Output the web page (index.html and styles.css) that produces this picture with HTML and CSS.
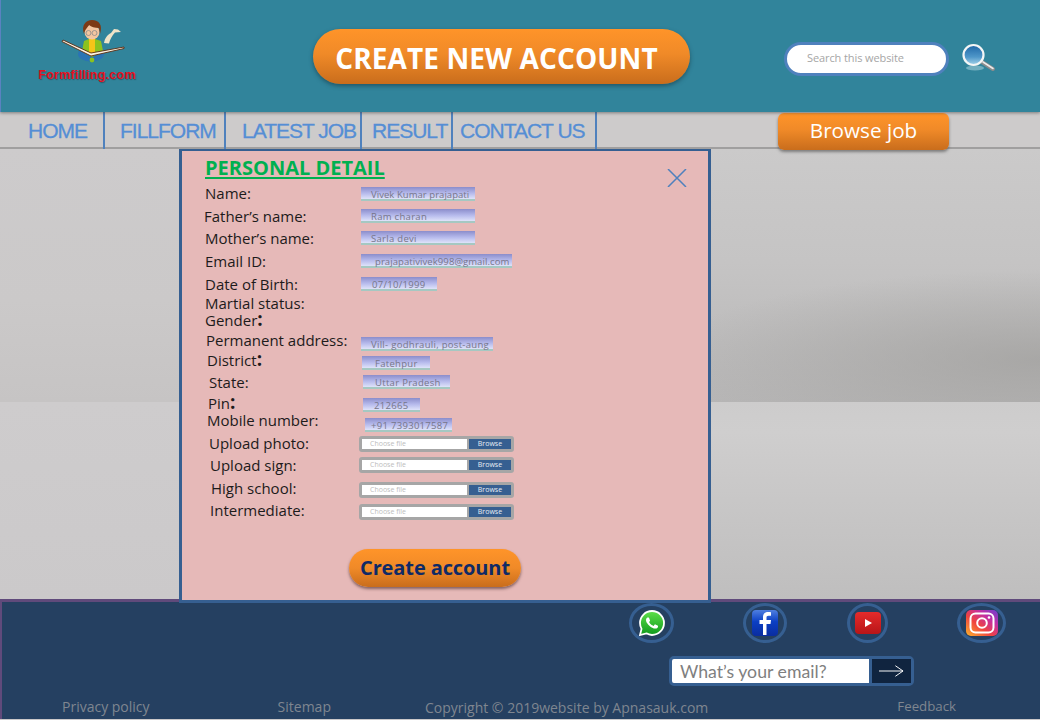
FILE: index.html
```html
<!DOCTYPE html>
<html lang="en">
<head>
<meta charset="utf-8">
<title>Create new account</title>
<link rel="stylesheet" href="styles.css">
</head>
<body>
<header class="top">
  <a class="logo">
    <svg class="logo-art" viewBox="36 18 100 50" aria-hidden="true">
      <path d="M103 43c1-5 3-8 7-10l3-4 4 .5 3 2.500-6 .5c-3 3-5 7-6 11z" fill="#efe3c8"/>
      <ellipse cx="90" cy="54" rx="13" ry="7.500" fill="#2a74b4"/>
      <path d="M83 41l5-2h6l6 2 2 10-11 6-10-6z" fill="#8cc21f"/>
      <rect x="88" y="39" width="6" height="15" fill="#f5c518"/>
      <circle cx="91" cy="60" r="2.400" fill="#8cc21f"/>
      <ellipse cx="91" cy="32" rx="7.500" ry="7.500" fill="#f3c6a0"/>
      <path d="M83 34c-3-9 2-14 8-14 7 0 11 5 8 14l-1-6c-4 0-8-1-10-3-1 2-4 4-5 9z" fill="#7c3a14"/>
      <g fill="none" stroke="#8a8a8a" stroke-width=".8"><circle cx="87.500" cy="33" r="2.500"/><circle cx="93.500" cy="33" r="2.500"/></g>
      <path d="M62 40l28 13 33-6v1.500L90 56 61 41.500z" fill="#fbf3e2" stroke="#5a2a10" stroke-width=".9"/>
    </svg>
    <span class="logo-text">Formfilling.com</span>
  </a>
  <a class="cta">CREATE NEW ACCOUNT</a>
  <div class="search"><span class="search-hint">Search this website</span></div>
  <svg class="lens" viewBox="0 0 40 34" aria-hidden="true">
    <defs>
      <linearGradient id="lensFill" x1="0" y1="0" x2="0" y2="1"><stop offset="0" stop-color="#1d66a6"/><stop offset=".6" stop-color="#4f97c9"/><stop offset="1" stop-color="#a6d3ea"/></linearGradient>
    </defs>
    <ellipse cx="17" cy="26" rx="9" ry="2.500" fill="#8fc0cf" opacity=".7"/>
    <path d="M24 20l11 7" stroke="#8c8c8c" stroke-width="4" stroke-linecap="round"/>
    <path d="M25 20l10 6.500" stroke="#ececec" stroke-width="1.500" stroke-linecap="round"/>
    <circle cx="15.500" cy="13" r="10" fill="url(#lensFill)" stroke="#f4f6f6" stroke-width="2.200"/>
  </svg>
</header>

<nav class="nav">
  <a class="nav-item nav-home">HOME</a>
  <a class="nav-item nav-fill">FILLFORM</a>
  <a class="nav-item nav-latest">LATEST JOB</a>
  <a class="nav-item nav-result">RESULT</a>
  <a class="nav-item nav-contact">CONTACT US</a>
  <a class="browse-job">Browse job</a>
</nav>

<main class="stage">
  <section class="panel">
    <svg class="close" viewBox="0 0 20 18" aria-hidden="true"><path d="M1 0l18 18M19 0L1 18" stroke="#4f81bd" stroke-width="1.500"/></svg>
    <h1 class="title">PERSONAL DETAIL</h1>
    <div class="row r-name"><span class="label">Name:</span><span class="field">Vivek Kumar prajapati</span></div>
    <div class="row r-father"><span class="label">Father’s name:</span><span class="field">Ram charan</span></div>
    <div class="row r-mother"><span class="label">Mother’s name:</span><span class="field">Sarla devi</span></div>
    <div class="row r-email"><span class="label">Email ID:</span><span class="field">prajapativivek998@gmail.com</span></div>
    <div class="row r-dob"><span class="label">Date of Birth:</span><span class="field">07/10/1999</span></div>
    <div class="row r-marital"><span class="label">Martial status:</span></div>
    <div class="row r-gender"><span class="label">Gender<b class="colon">:</b></span></div>
    <div class="row r-address"><span class="label">Permanent address:</span><span class="field">Vill- godhrauli, post-aung</span></div>
    <div class="row r-district"><span class="label">District<b class="colon">:</b></span><span class="field">Fatehpur</span></div>
    <div class="row r-state"><span class="label">State:</span><span class="field">Uttar Pradesh</span></div>
    <div class="row r-pin"><span class="label">Pin<b class="colon">:</b></span><span class="field">212665</span></div>
    <div class="row r-mobile"><span class="label">Mobile number:</span><span class="field">+91 7393017587</span></div>
    <div class="row r-photo"><span class="label">Upload photo:</span><span class="file"><span class="file-name">Choose file</span><span class="file-btn">Browse</span></span></div>
    <div class="row r-sign"><span class="label">Upload sign:</span><span class="file"><span class="file-name">Choose file</span><span class="file-btn">Browse</span></span></div>
    <div class="row r-high"><span class="label">High school:</span><span class="file"><span class="file-name">Choose file</span><span class="file-btn">Browse</span></span></div>
    <div class="row r-inter"><span class="label">Intermediate:</span><span class="file"><span class="file-name">Choose file</span><span class="file-btn">Browse</span></span></div>
    <a class="submit">Create account</a>
  </section>
</main>

<footer class="foot">
  <div class="social">
    <a class="ring ring-wa">
      <svg class="ico-wa" viewBox="-1 -1 26 26" aria-hidden="true">
        <defs><linearGradient id="waFill" x1="0" y1="0" x2="0" y2="1"><stop offset="0" stop-color="#5fe04a"/><stop offset="1" stop-color="#0f9a1c"/></linearGradient></defs>
        <path d="M12 0C5.373 0 0 5.373 0 12c0 2.123.554 4.117 1.528 5.845L0 24l6.335-1.652A11.95 11.950 0 0012 24c6.627 0 12-5.373 12-12S18.627 0 12 0z" fill="url(#waFill)" stroke="#fff" stroke-width="1.800"/>
        <path d="M17.472 14.382c-.297-.149-1.758-.867-2.030-.967-.273-.099-.471-.148-.670.150-.197.297-.767.966-.940 1.164-.173.199-.347.223-.644.075-.297-.150-1.255-.463-2.390-1.475-.883-.788-1.480-1.761-1.653-2.059-.173-.297-.018-.458.130-.606.134-.133.298-.347.446-.520.149-.174.198-.298.298-.497.099-.198.050-.371-.025-.520-.075-.149-.669-1.612-.916-2.207-.242-.579-.487-.500-.669-.510-.173-.008-.371-.010-.570-.010-.198 0-.520.074-.792.372-.272.297-1.040 1.016-1.040 2.479 0 1.462 1.065 2.875 1.213 3.074.149.198 2.096 3.200 5.077 4.487.709.306 1.262.489 1.694.625.712.227 1.360.195 1.871.118.571-.085 1.758-.719 2.006-1.413.248-.694.248-1.289.173-1.413-.074-.124-.272-.198-.570-.347" fill="#fff"/>
      </svg>
    </a>
    <a class="ring ring-fb">
      <svg class="ico-fb" viewBox="0 0 26 26" aria-hidden="true">
        <defs><linearGradient id="fbFill" x1="0" y1="0" x2="0" y2="1"><stop offset="0" stop-color="#4f7fe0"/><stop offset=".45" stop-color="#0b3fc4"/><stop offset="1" stop-color="#0a2da0"/></linearGradient></defs>
        <rect width="26" height="26" rx="4" fill="url(#fbFill)"/>
        <path d="M14.500 25V14h4l.5-4h-4.500V7.600c0-1.200.5-1.900 2-1.900H19V2.300c-.6-.1-1.600-.2-2.800-.2-3.200 0-5.200 1.900-5.200 5.100V10H7.500v4H11v11z" fill="#fff"/>
      </svg>
    </a>
    <a class="ring ring-yt">
      <svg class="ico-yt" viewBox="0 0 26 22" aria-hidden="true">
        <defs><linearGradient id="ytFill" x1="0" y1="0" x2="0" y2="1"><stop offset="0" stop-color="#e52b2b"/><stop offset="1" stop-color="#b81518"/></linearGradient></defs>
        <rect width="26" height="22" rx="4" fill="url(#ytFill)"/>
        <path d="M10 7l7 4-7 4z" fill="#fff"/>
      </svg>
    </a>
    <a class="ring ring-ig">
      <svg class="ico-ig" viewBox="0 0 32 26" aria-hidden="true">
        <defs><linearGradient id="igFill" x1="0" y1="1" x2="1" y2="0"><stop offset="0" stop-color="#fdb52c"/><stop offset=".4" stop-color="#f0433f"/><stop offset=".7" stop-color="#c22fa5"/><stop offset="1" stop-color="#6a43d0"/></linearGradient></defs>
        <rect width="32" height="26" rx="5" fill="url(#igFill)"/>
        <rect x="4.500" y="3.500" width="23" height="19" rx="5" fill="none" stroke="#fff" stroke-width="2"/>
        <circle cx="16" cy="13" r="4.800" fill="none" stroke="#fff" stroke-width="2"/>
        <circle cx="23" cy="7.500" r="1.300" fill="#fff"/>
      </svg>
    </a>
  </div>
  <div class="subscribe">
    <span class="sub-input">What’s your email?</span>
    <a class="sub-go"><svg class="sub-arrow" viewBox="0 0 26 12" aria-hidden="true"><path d="M0 6h25M17 .5L25 6l-8 5.500" fill="none" stroke="#fff" stroke-width="1"/></svg></a>
  </div>
  <div class="links">
    <a class="link l-privacy">Privacy policy</a>
    <a class="link l-sitemap">Sitemap</a>
    <span class="link l-copy">Copyright © 2019website by Apnasauk.com</span>
    <a class="link l-feedback">Feedback</a>
  </div>
</footer>
</body>
</html>
```
FILE: styles.css
```css
* { box-sizing: border-box; }
html, body { margin: 0; height: 720px; overflow: hidden; }
body { font-family: "Open Sans", "Noto Sans", sans-serif; background: #cbc9ca; width: 1040px; }
a { color: inherit; text-decoration: none; }

/* header */
.top {
  height: 112px; background: #31849b; border-left: 1px solid #5a82c0;
  display: flex; align-items: flex-start; position: relative; z-index: 3;
  box-shadow: 0 1px 3px rgba(60, 60, 60, .55);
}
.logo { margin-left: 34px; width: 104px; display: flex; flex-direction: column; align-items: center; }
.logo-art { width: 100px; height: 50px; margin-top: 18px; display: block; }
.logo-text {
  font-family: "Liberation Sans", sans-serif; font-weight: 700;
  font-size: 12.500px; line-height: 14px; color: #e3101f; letter-spacing: .25px;
  text-shadow: 1px 1px 1px rgba(40, 40, 40, .45); white-space: nowrap;
}
.cta {
  margin: 29px 0 0 174px; width: 377px; height: 55px; border-radius: 28px; padding-right: 10px;
  background: linear-gradient(#ff9429 0%, #f08a28 45%, #c96d1c 100%);
  color: #fff; font-weight: 700; font-size: 28px; letter-spacing: .1px; line-height: 58px; text-align: center;
  box-shadow: 0 2px 4px rgba(20, 50, 60, .55); white-space: nowrap;
}
.search {
  margin: 42px 0 0 94px; width: 165px; height: 34px; border: 3px solid #4f81bd; border-radius: 17px;
  background: #fff; padding-left: 20px; font-size: 11px; letter-spacing: -.1px; line-height: 26px; color: #a6a6a6;
}
.lens { width: 40px; height: 34px; margin: 42px 0 0 9px; }

/* navigation */
.nav {
  height: 37px; display: flex; align-items: stretch; position: relative; z-index: 2;
  background: #cdcbcb; border-bottom: 2px solid #a09f9f;
  font-family: "Liberation Sans", sans-serif; font-size: 21px; color: #558ed5; letter-spacing: -1px;
  -webkit-text-stroke: .3px #558ed5;
}
.nav-item { border-right: 2px solid #4f81bd; line-height: 37px; margin-bottom: -2px; white-space: nowrap; }
.nav-home { width: 105px; padding-left: 28px; }
.nav-fill { width: 121px; padding-left: 15px; }
.nav-latest { width: 136px; padding-left: 16px; }
.nav-result { width: 91px; padding-left: 10px; }
.nav-contact { width: 144px; padding-left: 7px; }
.browse-job {
  margin: 1px 0 -3px 181px; width: 171px; border-radius: 6px;
  background: linear-gradient(#ff9429 0%, #f08a28 45%, #c96d1c 100%);
  font-family: "Open Sans", sans-serif; font-size: 20.700px; letter-spacing: 0; color: #fff;
  -webkit-text-stroke: 0; line-height: 35px; text-align: center;
  box-shadow: 0 2px 3px rgba(60, 60, 60, .55); position: relative; z-index: 3;
}

/* backdrop */
.stage {
  height: 451px; padding-left: 179px; position: relative; z-index: 1;
  background:
    radial-gradient(ellipse 380px 90px at 100% 212px, rgba(160, 159, 157, .7), rgba(170, 170, 170, 0) 100%) 500px 0 / 540px 254px no-repeat,
    linear-gradient(#cbcaca 0, #c5c4c4 45%, #b7b6b6 100%) 500px 0 / 540px 254px no-repeat,
    linear-gradient(#cdcccc 0, #cfcece 15%, #c6c5c5 60%, #bfbebe 100%) 500px 254px / 540px 197px no-repeat,
    linear-gradient(#cdcbcc 0, #cbc9c9 60%, #c6c4c4 100%) 0 0 / 500px 254px no-repeat,
    linear-gradient(#cecccd 0, #cbc9ca 100%) 0 254px / 500px 197px no-repeat;
}
.panel {
  width: 532px; height: 455px; margin-top: -1px; position: relative;
  background: #e6b9b8; border: 3px solid #365f91; padding: 6px 0 0 22px;
  color: #1d1b1b;
}
.close { position: absolute; left: 485px; top: 18px; width: 20px; height: 18px; }
.title {
  margin: 0 0 7px 1px; font-size: 20px; line-height: 21px; font-weight: 700; color: #00b050;
  text-decoration: underline; text-underline-offset: 2px; text-decoration-thickness: 2px;
}

/* form rows */
.row {
  display: grid; grid-template-columns: 157px auto; justify-content: start; align-items: start;
  height: 16px; margin-top: var(--gap, 0); white-space: nowrap;
  --lx: 1px; --fx: 0px; --fy: 1px; --tx: 10px; --fw: 114px; --ls: .3px;
}
.label { font-size: 15px; line-height: 16px; padding-left: var(--lx); }
.colon { font-size: 19px; line-height: 12px; }
.field {
  display: block; width: var(--fw); height: 14px; margin: var(--fy) 0 0 var(--fx); padding-left: var(--tx);
  background: linear-gradient(#8b8dcb 0, #b6baec 45%, #dfe3fa 86%, #a5c8c2 86%, #a5c8c2 100%);
  font-size: 9.500px; line-height: 15px; letter-spacing: var(--ls); color: #77768a;
}
.r-name { --gap: 0px; --fy: 2px; --ls: .05px; }
.r-father { --gap: 7px; --lx: 0px; }
.r-mother { --gap: 6px; }
.r-email { --gap: 7px; --fw: 151px; --tx: 14px; --ls: .08px; }
.r-dob { --gap: 7px; --fw: 76px; --tx: 11px; }
.r-marital { --gap: 3px; }
.r-gender { --gap: 1px; }
.r-address { --gap: 4px; --lx: 2px; --fw: 132px; --fy: 5px; }
.r-district { --gap: 4px; --lx: 3px; --fx: 1px; --fw: 68px; --tx: 13px; --fy: 4px; }
.r-state { --gap: 6px; --lx: 5px; --fx: 2px; --fw: 87px; --tx: 12px; --fy: 1px; }
.r-pin { --gap: 5px; --lx: 4px; --fx: 2px; --fw: 57px; --tx: 11px; --fy: 3px; }
.r-mobile { --gap: 1px; --lx: 3px; --fx: 4px; --fw: 87px; --tx: 6px; --fy: 6px; }
.r-photo { --gap: 7px; --lx: 5px; --fy: 1px; }
.r-sign { --gap: 6px; --lx: 6px; --fy: 0px; }
.r-high { --gap: 7px; --lx: 7px; --fy: 2px; }
.r-inter { --gap: 6px; --lx: 6px; --fy: 2px; }
.file {
  display: flex; justify-content: space-between; width: 155px; height: 16px; margin: var(--fy) 0 0 -2px;
  background: #fff; border: 3px solid #a6a6a6; border-radius: 3px; font-size: 7px; line-height: 10px;
}
.file-name { padding-left: 8px; color: #bdbdbd; }
.file-btn {
  width: 44px; background: #365f91; border-left: 2px solid #a6a6a6; color: #e8edf4; text-align: center;
}
.submit {
  position: absolute; left: 167px; top: 398px; width: 172px; height: 38px; border-radius: 19px;
  background: linear-gradient(#ff9429 0%, #f08a28 50%, #c96d1c 100%);
  color: #0f2a66; font-weight: 700; font-size: 20px; letter-spacing: -.1px; line-height: 37px; text-align: center;
  box-shadow: 0 2px 3px rgba(70, 40, 40, .6);
}

/* footer */
.foot {
  height: 120px; background: #254061; border-top: 3px solid #604a7b; border-left: 2px solid #604a7b;
  color: #7f8690; position: relative;
}
.social { display: flex; align-items: center; margin: 1px 0 0 627px; height: 40px; }
.ring {
  height: 40px; border: 3px solid #365f91; border-radius: 50%;
  display: flex; align-items: center; justify-content: center;
}
.ring-wa { width: 45px; }
.ring-fb { width: 44px; margin-left: 69px; }
.ring-yt { width: 41px; margin-left: 60px; }
.ring-ig { width: 49px; margin-left: 69px; }
.ico-wa { width: 26px; height: 26px; }
.ico-fb { width: 26px; height: 26px; }
.ico-yt { width: 26px; height: 22px; }
.ico-ig { width: 32px; height: 26px; }
.subscribe {
  display: flex; justify-content: space-between; width: 245px; height: 30px; margin: 13px 0 0 667px;
  background: #fff; border: 3px solid #365f91; border-radius: 5px;
}
.sub-input { font-family: Lato, "Open Sans", sans-serif; font-size: 17.700px; line-height: 26px; color: #7f7f7f; padding-left: 8px; }
.sub-go {
  width: 42px; background: #10243f; border-left: 3px solid #365f91; display: flex; align-items: center; justify-content: center;
}
.sub-arrow { width: 25px; height: 12px; }
.links { display: flex; align-items: flex-start; margin: 11px 0 0; font-size: 14px; line-height: 20px; white-space: nowrap; }
.l-privacy { margin-left: 60px; }
.l-sitemap { margin-left: 128px; }
.l-copy { margin-left: 94px; margin-top: 1px; }
.l-feedback { margin-left: 189px; margin-top: -1px; font-size: 13.300px; }
```
